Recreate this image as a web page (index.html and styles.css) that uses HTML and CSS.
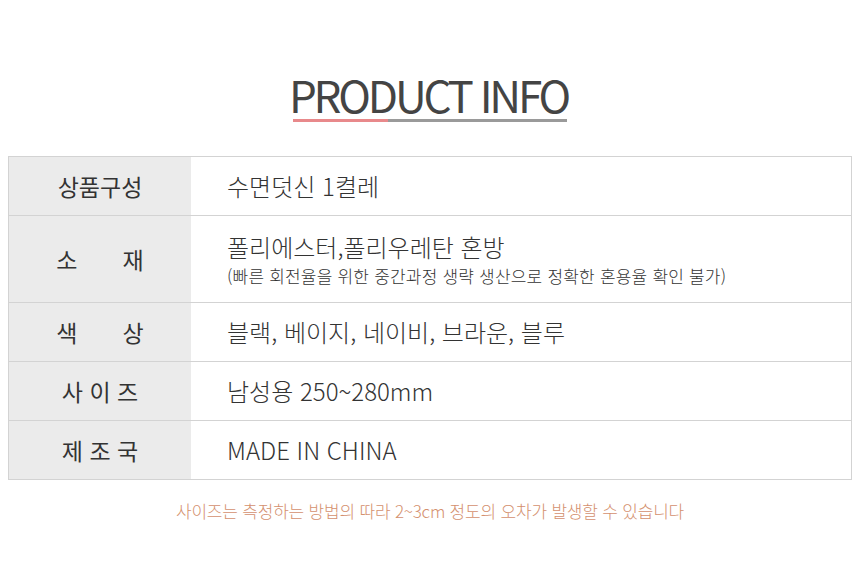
FILE: index.html
```html
<!DOCTYPE html>
<html lang="ko">
<head>
<meta charset="utf-8">
<link rel="stylesheet" href="styles.css">
</head>
<body>
<div class="page">
  <div class="heading">
    <h1 class="title">PRODUCT INFO</h1>
    <div class="underline"><span class="ul-pink"></span><span class="ul-gray"></span></div>
  </div>
  <div class="table">
    <div class="row">
      <div class="label">상품구성</div>
      <div class="value">수면덧신 1켤레</div>
    </div>
    <div class="row tall">
      <div class="label">소<span class="gap"></span>재</div>
      <div class="value">
        <div class="main">폴리에스터,폴리우레탄 혼방</div>
        <div class="sub">(빠른 회전율을 위한 중간과정 생략 생산으로 정확한 혼용율 확인 불가)</div>
      </div>
    </div>
    <div class="row">
      <div class="label">색<span class="gap"></span>상</div>
      <div class="value">블랙, 베이지, 네이비, 브라운, 블루</div>
    </div>
    <div class="row">
      <div class="label">사 이 즈</div>
      <div class="value">남성용 250~280mm</div>
    </div>
    <div class="row">
      <div class="label">제 조 국</div>
      <div class="value">MADE IN CHINA</div>
    </div>
  </div>
  <p class="note">사이즈는 측정하는 방법의 따라 2~3cm 정도의 오차가 발생할 수 있습니다</p>
</div>
</body>
</html>
```
FILE: styles.css
```css
html, body {
  margin: 0;
  padding: 0;
  background: #fff;
}
body {
  font-family: "Noto Sans CJK KR", "Noto Sans", sans-serif;
  color: #444;
}
.page {
  padding: 0 8px;
}
.heading {
  display: flex;
  flex-direction: column;
  align-items: center;
  padding-top: 66px;
}
.title {
  margin: 0;
  font-size: 44px;
  font-weight: 400;
  line-height: 56px;
  letter-spacing: -3.2px;
  text-indent: -3px;
  color: #444;
}
.underline {
  display: flex;
  width: 274px;
  height: 3px;
  margin-top: -3px;
}
.ul-pink {
  width: 95px;
  background: #e8898b;
}
.ul-gray {
  flex: 1;
  background: #9a9a9a;
}
.table {
  margin-top: 34px;
  border: 1px solid #d3d3d3;
}
.row {
  display: grid;
  grid-template-columns: 182px 1fr;
  height: 58px;
  border-top: 1px solid #d3d3d3;
}
.row:first-child {
  border-top: none;
}
.row.tall {
  height: 86px;
}
.label {
  background: #ebebeb;
  display: flex;
  align-items: center;
  justify-content: center;
  font-size: 23px;
  font-weight: 400;
  color: #333;
}
.gap {
  display: inline-block;
  width: 45px;
}
.value {
  display: flex;
  flex-direction: column;
  justify-content: center;
  padding-left: 36px;
  font-size: 24px;
  font-weight: 300;
  color: #333;
  line-height: 30px;
}
.value .main {
  line-height: 34px;
}
.value .sub {
  font-size: 17px;
  line-height: 24px;
  letter-spacing: 0.2px;
}
.note {
  margin: 18px 0 0;
  text-align: center;
  font-size: 17px;
  font-weight: 300;
  color: #d4906e;
  letter-spacing: -0.2px;
}
```
